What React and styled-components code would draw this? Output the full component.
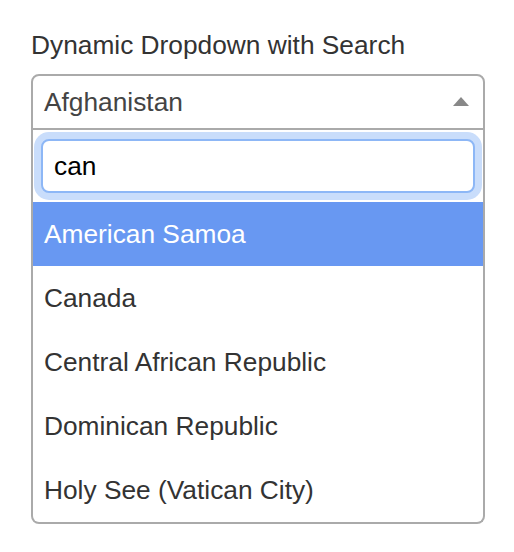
import React, { useState } from "react";
import styled, { createGlobalStyle } from "styled-components";

const GlobalStyle = createGlobalStyle`
  html, body {
    margin: 0;
    padding: 0;
    background: #ffffff;
    font-family: "Liberation Sans", Arial, Helvetica, sans-serif;
  }
`;

const Wrapper = styled.div`
  padding: 30px 29px 0 31px;
  width: 454px;
`;

const Label = styled.div`
  font-size: 26.3px;
  line-height: 30px;
  color: #333;
  margin-bottom: 14px;
`;

const Selection = styled.div`
  box-sizing: border-box;
  height: 56px;
  border: 2px solid #aaa;
  border-radius: 8px 8px 0 0;
  display: flex;
  align-items: center;
  justify-content: space-between;
  padding: 0 14px 0 11px;
  font-size: 26.3px;
  color: #444;
`;

const Arrow = styled.span`
  width: 0;
  height: 0;
  border-left: 8px solid transparent;
  border-right: 8px solid transparent;
  border-bottom: 9px solid #888;
  margin-top: -2px;
`;

const Dropdown = styled.div`
  box-sizing: border-box;
  border: 2px solid #aaa;
  border-top: none;
  border-radius: 0 0 8px 8px;
  overflow: hidden;
`;

const SearchBox = styled.div`
  padding: 9px 8px 9px 8px;
`;

const SearchInput = styled.input`
  box-sizing: border-box;
  display: block;
  width: 100%;
  height: 54px;
  border: 2px solid #8db7f6;
  border-radius: 8px;
  box-shadow: 0 0 0 7px #c9ddfb;
  outline: none;
  padding: 0 11px;
  font-family: "Liberation Sans", Arial, Helvetica, sans-serif;
  font-size: 26.3px;
  color: #000;
`;

const Option = styled.div`
  height: 64px;
  display: flex;
  align-items: center;
  padding: 0 11px;
  font-size: 26.3px;
  color: ${({ active }) => (active ? "#fff" : "#333")};
  background: ${({ active }) => (active ? "#6898f2" : "transparent")};
`;

const countries = [
  "American Samoa",
  "Canada",
  "Central African Republic",
  "Dominican Republic",
  "Holy See (Vatican City)",
];

export default function App() {
  const [query, setQuery] = useState("can");

  return (
    <>
      <GlobalStyle />
      <Wrapper>
        <Label>Dynamic Dropdown with Search</Label>
        <Selection>
          <span>Afghanistan</span>
          <Arrow />
        </Selection>
        <Dropdown>
          <SearchBox>
            <SearchInput value={query} onChange={(e) => setQuery(e.target.value)} />
          </SearchBox>
          {countries.map((c, i) => (
            <Option key={c} active={i === 0}>
              {c}
            </Option>
          ))}
        </Dropdown>
      </Wrapper>
    </>
  );
}
